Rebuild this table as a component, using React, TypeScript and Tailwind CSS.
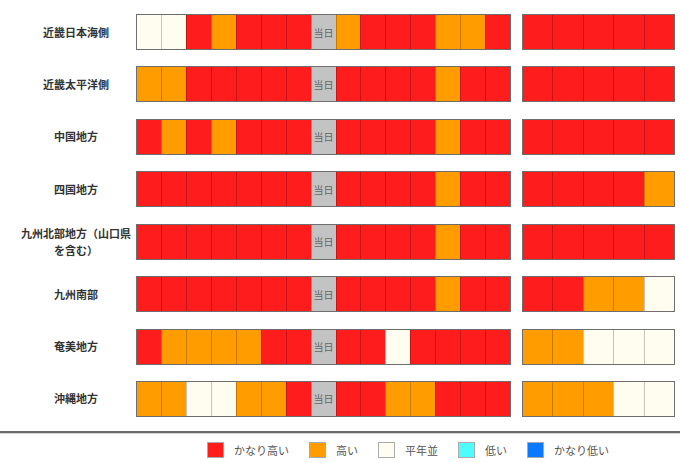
const C: Record<string, string> = {
  R: "bg-[#ff1c1c]",
  O: "bg-[#ff9c00]",
  W: "bg-[#fffdef]",
};

interface Region {
  name: string[];
  before: string;
  after: string;
  week2: string;
}

// 7 days before today, 7 days after, then the 5-slot second-week bar
const regions: Region[] = [
  { name: ["近畿日本海側"], before: "WWRORRR", after: "ORRROOR", week2: "RRRRR" },
  { name: ["近畿太平洋側"], before: "OORRRRR", after: "RRRRORR", week2: "RRRRR" },
  { name: ["中国地方"], before: "RORORRR", after: "RRRRORR", week2: "RRRRR" },
  { name: ["四国地方"], before: "RRRRRRR", after: "RRRRORR", week2: "RRRRO" },
  { name: ["九州北部地方（山口県", "を含む）"], before: "RRRRRRR", after: "RRRRORR", week2: "RRRRR" },
  { name: ["九州南部"], before: "RRRRRRR", after: "RRRRORR", week2: "RROOW" },
  { name: ["奄美地方"], before: "ROOOORR", after: "RRWRRRR", week2: "OOWWW" },
  { name: ["沖縄地方"], before: "OOWWOOR", after: "RROORRR", week2: "OOOWW" },
];

const legend = [
  { label: "かなり高い", color: "bg-[#ff1c1c]" },
  { label: "高い", color: "bg-[#ff9c00]" },
  { label: "平年並", color: "bg-[#fffdef]" },
  { label: "低い", color: "bg-[#4dfcff]" },
  { label: "かなり低い", color: "bg-[#0a78ff]" },
];

function Cell({ code, first }: { code: string; first?: boolean }) {
  return (
    <div
      className={`flex-1 ${C[code]} ${first ? "" : "border-l border-[rgba(0,0,0,0.22)]"}`}
    />
  );
}

function RegionRow({ region }: { region: Region }) {
  return (
    <div className="flex items-center h-[36px]">
      <div className="w-[136px] shrink-0 pl-[16px] text-[11px] leading-[17px] font-bold text-[#333]">
        {region.name.map((line) => (
          <div key={line} className="w-full text-center whitespace-nowrap">
            {line}
          </div>
        ))}
      </div>
      <div className="flex w-[375px] shrink-0 h-full border border-[#6e6e6e]">
        {region.before.split("").map((c, i) => (
          <Cell key={"b" + i} code={c} first={i === 0} />
        ))}
        <div className="flex-1 flex items-center justify-center bg-[#c3c3c3] border-l border-[rgba(0,0,0,0.22)] text-[10px] text-[#666]">
          当日
        </div>
        {region.after.split("").map((c, i) => (
          <Cell key={"a" + i} code={c} />
        ))}
      </div>
      <div className="flex w-[153px] shrink-0 h-full ml-[11px] border border-[#6e6e6e]">
        {region.week2.split("").map((c, i) => (
          <Cell key={"w" + i} code={c} first={i === 0} />
        ))}
      </div>
    </div>
  );
}

export default function App() {
  return (
    <div
      className="w-[680px] h-[463px] bg-white overflow-hidden"
      style={{ fontFamily: '"Noto Sans CJK JP", "Noto Sans", sans-serif' }}
    >
      <div className="flex flex-col gap-[16.43px] pt-[14px]">
        {regions.map((r) => (
          <RegionRow key={r.name[0]} region={r} />
        ))}
      </div>
      <div className="mt-[14px] h-[2px] bg-[#6a6a6a] shadow-[0_1px_1px_#d0d0d0]" />
      <div className="flex items-center pl-[207px] mt-[9px] text-[11px] text-[#555]">
        {legend.map((l) => (
          <div key={l.label} className="flex items-center mr-[20px]">
            <div className={`w-[17px] h-[16px] ${l.color} border border-[#aaa]`} />
            <span className="ml-[10px]">{l.label}</span>
          </div>
        ))}
      </div>
    </div>
  );
}
